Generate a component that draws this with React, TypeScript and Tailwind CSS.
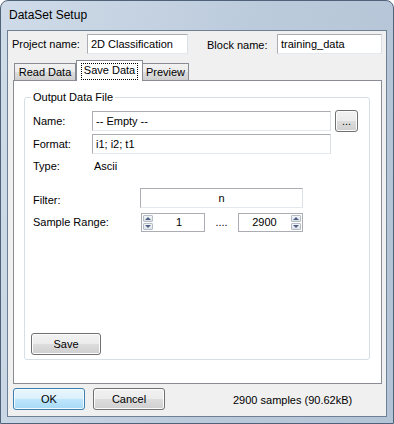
import React from "react";

const font = "font-['Liberation_Sans','Arial',sans-serif] text-[11px] leading-[13px] text-black";

const btnFace =
  "border-[#707070] bg-[linear-gradient(#f2f2f2,#ebebeb_50%,#dddddd_50%,#cfcfcf)] shadow-[inset_0_0_0_1px_#fcfcfc]";
const btnDefault =
  "border-[#3c7fb1] bg-[linear-gradient(#eaf6fd,#d9f0fc_50%,#bee6fd_50%,#a7d9f5)] shadow-[inset_0_0_0_1px_#f4fbff]";

function Button({
  label,
  width,
  primary,
}: {
  label: string;
  width: string;
  primary?: boolean;
}) {
  return (
    <button
      className={`${width} h-[22px] rounded-[3px] border flex items-center justify-center ${
        primary ? btnDefault : btnFace
      }`}
    >
      {label}
    </button>
  );
}

function TextBox({
  value,
  width,
  center,
  height = "h-[20px]",
}: {
  value: string;
  width: string;
  center?: boolean;
  height?: string;
}) {
  return (
    <div
      className={`${width} ${height} bg-white border border-[#abadb3] border-r-[#dbdfe6] border-b-[#e3e9ef] flex items-center px-[3px] ${
        center ? "justify-center" : ""
      }`}
    >
      {value}
    </div>
  );
}

function SpinButtons() {
  return (
    <div className="w-[12px] h-full flex flex-col gap-px p-px">
      <div className="flex-1 rounded-[1px] border border-[#b6bdc6] bg-[linear-gradient(#f4f6f8,#dde2e8)] flex items-center justify-center">
        <div className="w-0 h-0 border-l-[3px] border-r-[3px] border-b-[3px] border-l-transparent border-r-transparent border-b-[#4d6185]" />
      </div>
      <div className="flex-1 rounded-[1px] border border-[#b6bdc6] bg-[linear-gradient(#f4f6f8,#dde2e8)] flex items-center justify-center">
        <div className="w-0 h-0 border-l-[3px] border-r-[3px] border-t-[3px] border-l-transparent border-r-transparent border-t-[#4d6185]" />
      </div>
    </div>
  );
}

function Spinner({
  value,
  width,
  left,
}: {
  value: string;
  width: string;
  left?: boolean;
}) {
  return (
    <div
      className={`${width} h-[19px] bg-white border border-[#abadb3] flex ${
        left ? "flex-row" : "flex-row-reverse"
      }`}
    >
      <SpinButtons />
      <div className="flex-1 flex items-center justify-center">{value}</div>
    </div>
  );
}

export default function App() {
  return (
    <div className={`w-[394px] h-[424px] ${font}`}>
      <div className="w-[394px] h-[424px] rounded-t-[8px] border border-[#4f627a] bg-[linear-gradient(100deg,#cfdbe8,#bccbdc_55%,#b3c4d6)] flex flex-col px-[6px] pb-[6px]">
        {/* title bar */}
        <div className="h-[29px] flex items-center pl-[2px] text-[12px]">
          DataSet Setup
        </div>

        {/* client area */}
        <div className="flex-1 border border-[#6f8094] bg-[#f0f0f0] flex flex-col">
          <div className="mt-[3px] flex items-center pl-[4px]">
            <span className="w-[75px]">Project name:</span>
            <TextBox value="2D Classification" width="w-[101px]" />
            <span className="ml-[19px] w-[70px] pt-[3px]">Block name:</span>
            <TextBox value="training_data" width="w-[105px]" />
          </div>

          {/* tabs */}
          <div className="mt-[6px] ml-[6px] flex items-end h-[20px]">
            <div className="w-[62px] h-[17px] border border-b-0 border-[#898c95] bg-[linear-gradient(#f2f2f2,#ebebeb_50%,#dddddd_50%,#cfcfcf)] flex items-center justify-center pt-px">
              Read Data
            </div>
            <div className="relative z-10 w-[67px] h-[21px] -mb-px border border-b-0 border-[#898c95] bg-white flex items-start justify-center pt-[2px]">
              <span className="border border-dotted border-black px-[2px] pb-[2px] leading-[13px]">
                Save Data
              </span>
            </div>
            <div className="w-[46px] h-[17px] border border-b-0 border-l-0 border-[#898c95] bg-[linear-gradient(#f2f2f2,#ebebeb_50%,#dddddd_50%,#cfcfcf)] flex items-center justify-center pt-px">
              Preview
            </div>
          </div>

          {/* tab panel */}
          <div className="ml-[5px] w-[369px] h-[304px] border border-[#898c95] bg-white flex flex-col">
            <fieldset className="mt-[10px] ml-[10px] w-[346px] h-[269px] rounded-[3px] border border-[#d5dfe5]">
              <legend className="ml-[6px] px-[2px]">Output Data File</legend>

              <div className="mt-[6px] flex items-center pl-[8px]">
                <span className="w-[59px]">Name:</span>
                <TextBox value="-- Empty --" width="w-[239px]" />
                <div className="ml-[4px]">
                  <Button label="..." width="w-[23px]" />
                </div>
              </div>

              <div className="mt-[2px] flex items-center pl-[8px]">
                <span className="w-[59px]">Format:</span>
                <TextBox value="i1; i2; t1" width="w-[239px]" />
              </div>

              <div className="mt-[5px] flex items-center pl-[8px] h-[14px]">
                <span className="w-[61px]">Type:</span>
                <span>Ascii</span>
              </div>

              <div className="mt-[15px] flex items-center pl-[8px]">
                <span className="w-[107px] pt-[4px]">Filter:</span>
                <TextBox value="n" width="w-[163px]" center />
              </div>

              <div className="mt-[5px] flex items-center pl-[8px]">
                <span className="w-[108px]">Sample Range:</span>
                <Spinner value="1" width="w-[64px]" left />
                <span className="w-[33px] text-center">....</span>
                <Spinner value="2900" width="w-[65px]" />
              </div>

              <div className="mt-[101px] ml-[6px]">
                <Button label="Save" width="w-[70px]" />
              </div>
            </fieldset>
          </div>

          {/* footer */}
          <div className="mt-[4px] ml-[5px] flex items-center">
            <Button label="OK" width="w-[72px]" primary />
            <div className="ml-[8px]">
              <Button label="Cancel" width="w-[72px]" />
            </div>
            <span className="ml-[68px] pt-[2px]">2900 samples (90.62kB)</span>
          </div>
        </div>
      </div>
    </div>
  );
}
